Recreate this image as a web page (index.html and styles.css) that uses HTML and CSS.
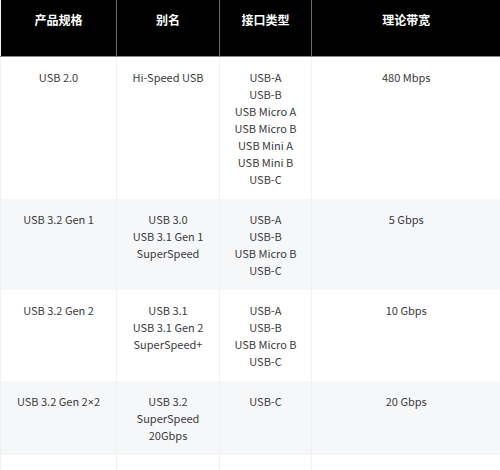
FILE: index.html
```html
<!DOCTYPE html>
<html lang="zh">
<head>
<meta charset="utf-8">
<link rel="stylesheet" href="styles.css">
</head>
<body>
<table class="spec">
  <colgroup>
    <col class="c1"><col class="c2"><col class="c3"><col class="c4">
  </colgroup>
  <thead>
    <tr><th>产品规格</th><th>别名</th><th>接口类型</th><th>理论带宽</th></tr>
  </thead>
  <tbody>
    <tr>
      <td>USB 2.0</td>
      <td>Hi-Speed USB</td>
      <td>USB-A<br>USB-B<br>USB Micro A<br>USB Micro B<br>USB Mini A<br>USB Mini B<br>USB-C</td>
      <td>480 Mbps</td>
    </tr>
    <tr class="alt">
      <td>USB 3.2 Gen 1</td>
      <td>USB 3.0<br>USB 3.1 Gen 1<br>SuperSpeed</td>
      <td>USB-A<br>USB-B<br>USB Micro B<br>USB-C</td>
      <td>5 Gbps</td>
    </tr>
    <tr>
      <td>USB 3.2 Gen 2</td>
      <td>USB 3.1<br>USB 3.1 Gen 2<br>SuperSpeed+</td>
      <td>USB-A<br>USB-B<br>USB Micro B<br>USB-C</td>
      <td>10 Gbps</td>
    </tr>
    <tr class="alt">
      <td>USB 3.2 Gen 2<span class="times">×</span>2</td>
      <td>USB 3.2<br>SuperSpeed<br>20Gbps</td>
      <td>USB-C</td>
      <td>20 Gbps</td>
    </tr>
    <tr class="empty">
      <td></td>
      <td></td>
      <td></td>
      <td></td>
    </tr>
  </tbody>
</table>
</body>
</html>
```

FILE: styles.css
```css
html, body {
  margin: 0;
  padding: 0;
  background: #ffffff;
}
body {
  font-family: "Noto Sans CJK SC", "Noto Sans", sans-serif;
  color: #333;
  overflow: hidden;
}
.spec {
  width: 500px;
  border-collapse: collapse;
  table-layout: fixed;
  border-left: 1px solid #f0f0f0;
}
.c1 { width: 116px; }
.c2 { width: 103px; }
.c3 { width: 92px; }
.c4 { width: 189px; }
.spec th {
  background: #000;
  color: #fff;
  font-family: "Noto Sans CJK SC", sans-serif;
  font-weight: 700;
  font-size: 12px;
  line-height: 18px;
  height: 56px;
  box-sizing: border-box;
  padding: 11px 4px 27px;
  text-align: center;
  vertical-align: top;
  border-left: 1px solid #6a6a6a;
  border-bottom: 1px solid #8a8a8a;
}
.spec th:first-child { border-left: none; }
.spec td {
  font-size: 11px;
  line-height: 17px;
  padding: 11.5px 4px;
  text-align: center;
  vertical-align: top;
  border-left: 1px solid #f1f1f1;
  color: #3a3a3a;
}
.spec td:first-child { border-left: none; }
.spec tr.alt td { background: #f6f7f9; }
.spec tr.empty td { height: 60px; }
.times {
  font-family: "Noto Sans", sans-serif;
}
```
